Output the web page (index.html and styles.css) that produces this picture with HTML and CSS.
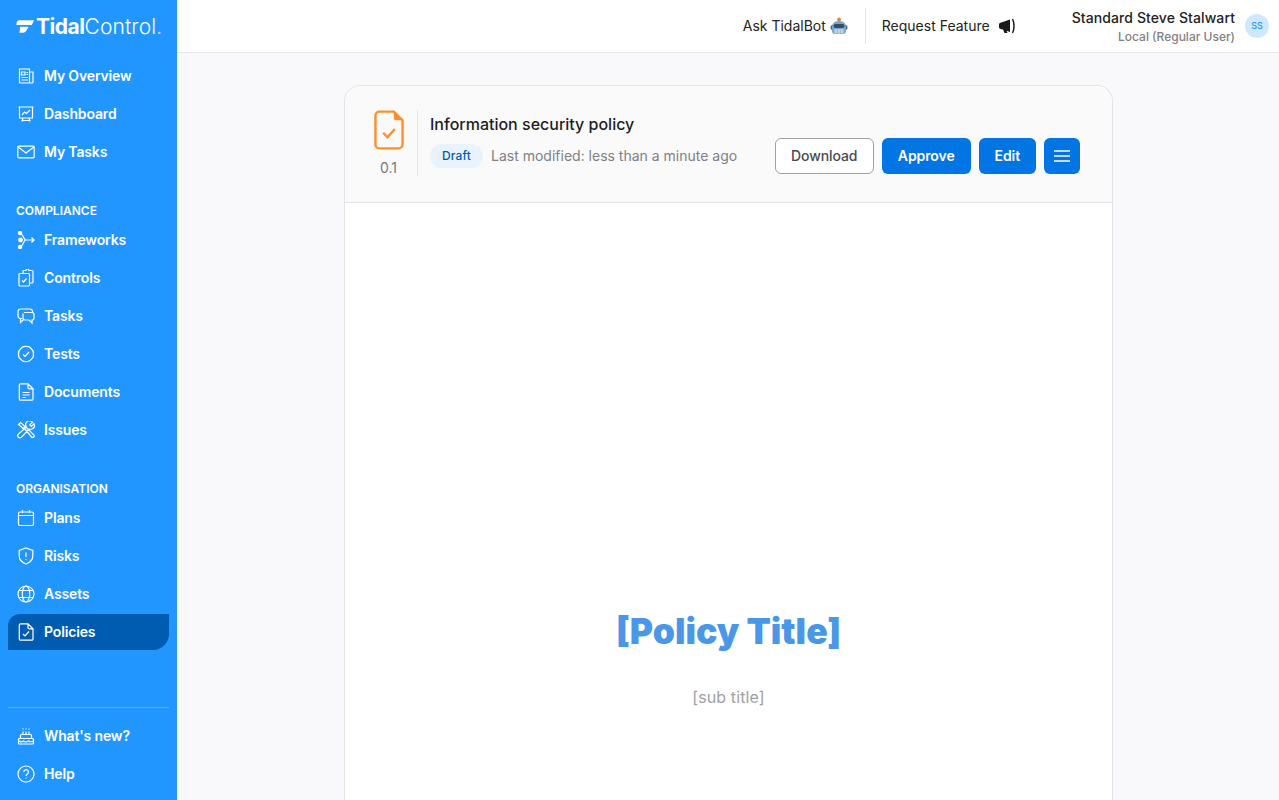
FILE: index.html
```html
<!DOCTYPE html>
<html lang="en">
<head>
    <meta charset="UTF-8">
    <meta name="viewport" content="width=device-width, initial-scale=1.0">
    <title>Information security policy</title>
    <link rel="stylesheet" href="styles.css">
</head>
<body>
<div class="app">
    <aside class="sidebar">
        <div class="logo">
            <svg class="logo-mark" viewBox="0 0 18 13"><path d="M3.2 0.3H18L15.8 4.900H0.500C0.300 2.300 1.300 0.300 3.200 0.300z" fill="#fff"/><path d="M4 6.800H12.500L10.800 10C9.800 12 8 12.800 5.800 12.800H3.300C4 10.800 3.900 8.800 4 6.800z" fill="#fff"/></svg>
            <span class="logo-text"><b>Tidal</b>Control<i>.</i></span>
        </div>
        <ul class="nav">
            <li><svg viewBox="0 0 18 18"><path d="M2.500 2h10v14h-9a1 1 0 0 1-1-1zM12.500 5h3.500v10a1 1 0 0 1-1 1h-2.500M4.500 5h3.500v3h-3.500zM9.500 5.500h1.500M9.500 7.500h1.500M4.500 10.500h6.500M4.500 13h6.500"/></svg>My Overview</li>
            <li><svg viewBox="0 0 18 18"><path d="M2.500 2h13v11h-13zM1.500 2h15M5 16.500l1-3.500M13 16.500l-1-3.500M4.500 15.500h9M5 10l2.500-3 2 1.500 3.500-3.500"/></svg>Dashboard</li>
            <li><svg viewBox="0 0 18 18"><path d="M.8 4.200a1 1 0 0 1 1-1h14.400a1 1 0 0 1 1 1v9.600a1 1 0 0 1-1 1H1.800a1 1 0 0 1-1-1zM1.200 4l7.800 6 7.800-6"/></svg>My Tasks</li>
        </ul>
        <h4 class="nav-title">COMPLIANCE</h4>
        <ul class="nav">
            <li><svg viewBox="0 0 18 18"><path d="M3 2c3 .5 3 5.500 5.500 7H17M3 16c3-.5 3-5.500 5.500-7M14.500 6.500 17 9l-2.500 2.500"/><circle class="dot" cx="3" cy="2" r="2.200"/><circle class="dot" cx="3.500" cy="9" r="2.400"/><circle class="dot" cx="3" cy="16" r="2.200"/></svg>Frameworks</li>
            <li><svg viewBox="0 0 18 18"><path d="M6 4.500V2.500a1 1 0 0 1 1-1h2a1.500 1.500 0 0 1 3 0h3a1 1 0 0 1 1 1V13a1 1 0 0 1-1 1h-2.500M3 4.500h8.500a1 1 0 0 1 1 1V16a1 1 0 0 1-1 1H3a1 1 0 0 1-1-1V5.500a1 1 0 0 1 1-1zM5 11.500l1.500 1.500 3-3.500"/></svg>Controls</li>
            <li><svg viewBox="0 0 18 18"><path d="M5 11.500H3.500a2.500 2.500 0 0 1-2.500-2.500V4.500A2.500 2.500 0 0 1 3.500 2h9.500a2.500 2.500 0 0 1 2.500 2.500v1M7 5.500h8a2 2 0 0 1 2 2V11a2 2 0 0 1-2 2v3l-3-3H8a2 2 0 0 1-2-2V6.500M3.500 11.500v4l3-3"/></svg>Tasks</li>
            <li><svg viewBox="0 0 18 18"><path d="M9 1.500A6 6 0 0 1 14.300 3.700A6 6 0 0 1 16.500 9A6 6 0 0 1 14.300 14.300A6 6 0 0 1 9 16.500A6 6 0 0 1 3.700 14.300A6 6 0 0 1 1.500 9A6 6 0 0 1 3.700 3.700A6 6 0 0 1 9 1.500zM6 9.500l2 2 4-4.500"/></svg>Tests</li>
            <li><svg viewBox="0 0 18 18"><path d="M3.500 .8h7.500l5 5V16a1.200 1.200 0 0 1-1.200 1.200H3.500A1.200 1.200 0 0 1 2.300 16V2A1.200 1.200 0 0 1 3.500 .8zM11 .8v3.700a1.300 1.300 0 0 0 1.300 1.300H16M5.500 9.500h7M5.500 12h7M5.500 14.500h3.500"/></svg>Documents</li>
            <li><svg viewBox="0 0 18 18"><path d="M1.500 3.500l2-2 4.500 4-2 2zM7.500 7.500l7 8.500a1.500 1.500 0 0 0 2.200-2.200L9.500 6.500M15.500 1.200l-2.800 2.500 1.700 1.700 2.600-2.600A3.800 3.800 0 0 1 12 8L4.800 15.800A2.200 2.200 0 1 1 1.800 12.800L9.500 6A3.800 3.800 0 0 1 15.500 1.200z"/></svg>Issues</li>
        </ul>
        <h4 class="nav-title">ORGANISATION</h4>
        <ul class="nav">
            <li><svg viewBox="0 0 18 18"><path d="M3 3h12a1.500 1.500 0 0 1 1.500 1.500V15a1.500 1.500 0 0 1-1.500 1.500H3A1.500 1.500 0 0 1 1.500 15V4.500A1.500 1.500 0 0 1 3 3zM1.500 6.500h15M5.500 1v3M12.500 1v3"/></svg>Plans</li>
            <li><svg viewBox="0 0 18 18"><path d="M9 1l6.800 2.500V9c0 4-3 6.500-6.800 8-3.800-1.500-6.800-4-6.800-8V3.500zM9 5.500V10M9 12v.8"/></svg>Risks</li>
            <li><svg viewBox="0 0 18 18"><circle cx="9" cy="9" r="8"/><ellipse cx="9" cy="9" rx="3.700" ry="8"/><path d="M2 5.500h14M2 12.500h14"/></svg>Assets</li>
            <li class="active"><svg viewBox="0 0 18 18"><path d="M3.500 .8h7.500l5 5V16a1.200 1.200 0 0 1-1.200 1.200H3.500A1.200 1.200 0 0 1 2.300 16V2A1.200 1.200 0 0 1 3.500 .8zM11 .8v3.700a1.300 1.300 0 0 0 1.300 1.300H16M6 11l2 2 4-4.500"/></svg>Policies</li>
        </ul>
        <div class="nav-bottom">
            <ul class="nav">
                <li><svg viewBox="0 0 18 18"><path d="M3.500 8.500a1 1 0 0 1 1-1h9a1 1 0 0 1 1 1v3h-11zM1.500 12.500a1 1 0 0 1 1-1h13a1 1 0 0 1 1 1V16a1 1 0 0 1-1 1h-13a1 1 0 0 1-1-1zM2 14c1.500 1 3 1 4.300 0 1.500 1 3.700 1 5.300 0 1.500 1 3 1 4.400 0M6 4.500v3M9 4.500v3M12 4.500v3M6 1.500v1M9 1.500v1M12 1.500v1"/></svg>What's new?</li>
                <li><svg viewBox="0 0 18 18"><circle cx="9" cy="9" r="8"/><path d="M6.800 7a2.300 2.300 0 1 1 3.500 2c-.9.600-1.300 1-1.300 2M9 12.800v.7"/></svg>Help</li>
            </ul>
        </div>
    </aside>
    <div class="main">
        <header class="topbar">
            <div class="top-link">Ask TidalBot
                <svg width="18" height="18" viewBox="0 0 18 18"><circle cx="9" cy="2.400" r="1.900" fill="#e8833a"/><path d="M9 3v2" stroke="#8a9aa8"/><rect x="0.500" y="8" width="17" height="5" rx="2" fill="#4a6a85"/><path d="M2 9a7 5 0 0 1 14 0v5a3 3 0 0 1-3 3H5a3 3 0 0 1-3-3z" fill="#7fa6c6"/><rect x="3.500" y="7" width="11" height="4" rx="2" fill="#2f4f6b"/><path d="M4 13h10M4 15h10M6 12v5M9 12v5M12 12v5" stroke="#dfe9f1" fill="none" stroke-width=".8"/></svg>
            </div>
            <span class="top-sep"></span>
            <div class="top-link feature">Request Feature
                <svg width="18" height="16" viewBox="0 0 18 16"><path d="M1 6.500C1 5.500 1.800 5 2.500 4.800L12 1.500V14L8.500 12.800 9.500 15H6.500L5 11.500 2.500 11C1.500 10.800 1 10 1 9z" fill="#1a1a1a"/><path d="M14.500 1c2 3.500 2 10.500 0 14" fill="none" stroke="#1a1a1a" stroke-width="1.500"/></svg>
            </div>
            <div class="user">
                <div class="user-name">Standard Steve Stalwart</div>
                <div class="user-role">Local (Regular User)</div>
            </div>
            <span class="avatar">SS</span>
        </header>
        <div class="content">
            <div class="card">
                <div class="card-head">
                    <div class="doc-version">
                        <svg viewBox="0.5 0.5 31 41"><path d="M6 2h15l9 9v25a4 4 0 0 1-4 4H6a4 4 0 0 1-4-4V6a4 4 0 0 1 4-4z" fill="none" stroke="#ff8f2b" stroke-width="2.500"/><path d="M21 1.500 30.500 11H24a3 3 0 0 1-3-3z" fill="#ff8f2b"/><path d="M10 24l4.500 4.500L22 20" fill="none" stroke="#ff8f2b" stroke-width="2.500"/></svg>
                        <span class="version">0.1</span>
                    </div>
                    <div class="doc-info">
                        <div class="doc-title">Information security policy</div>
                        <div class="doc-meta">
                            <span class="badge">Draft</span>
                            <span class="modified">Last modified: less than a minute ago</span>
                        </div>
                    </div>
                    <div class="actions">
                        <button class="btn btn-outline">Download</button>
                        <button class="btn">Approve</button>
                        <button class="btn">Edit</button>
                        <button class="btn btn-menu"><svg width="16" height="12" viewBox="0 0 16 12"><path d="M0 1h16M0 6h16M0 11h16" stroke="#fff" stroke-width="1.400"/></svg></button>
                    </div>
                </div>
                <div class="page">
                    <h1 class="policy-title">[Policy Title]</h1>
                    <p class="policy-sub">[sub title]</p>
                </div>
            </div>
        </div>
    </div>
</div>
</body>
</html>
```

FILE: styles.css
```css
*{
    margin: 0;
    padding: 0;
    box-sizing: border-box;
}
html, body{
    height: 100%;
    overflow: hidden;
}
body{
    font-family: Inter, "Liberation Sans", sans-serif;
    font-size: 14px;
    color: #1d1d1f;
}
.app{
    display: flex;
    height: 100%;
}
.sidebar{
    width: 177px;
    flex-shrink: 0;
    background: #2196ff;
    color: #fff;
    display: flex;
    flex-direction: column;
    padding: 0 8px;
}
.logo{
    height: 38px;
    margin-top: 7px;
    display: flex;
    align-items: center;
    gap: 2px;
    padding-left: 8px;
}
.logo-mark{
    flex-shrink: 0;
    width: 18px;
    height: 13px;
}
.logo-text{
    font-size: 21px;
    font-weight: 300;
    letter-spacing: 0.1px;
}
.logo-text b{
    font-weight: 700;
    letter-spacing: -0.45px;
}
.logo-text i{
    font-style: normal;
    opacity: 0.7;
}
.nav{
    list-style: none;
    display: flex;
    flex-direction: column;
    gap: 2px;
}
.logo + .nav{
    margin-top: 13px;
}
.nav>li{
    height: 36px;
    display: flex;
    align-items: center;
    gap: 9px;
    padding: 0 0 1px 9px;
    font-weight: 600;
    font-size: 14px;
    letter-spacing: -0.15px;
}
.nav svg{
    width: 18px;
    height: 18px;
    fill: none;
    stroke: #fff;
    stroke-width: 1.2;
    flex-shrink: 0;
}
.nav svg .dot{
    fill: #fff;
    stroke: none;
}
.nav>.active{
    background: #005cb0;
    border-radius: 12px 0 16px 0;
}
.nav-title{
    font-size: 12px;
    font-weight: 600;
    line-height: 14px;
    padding-left: 8px;
    margin-top: 34px;
    margin-bottom: 4px;
}
.nav-bottom{
    margin-top: auto;
    border-top: 1px solid rgba(255, 255, 255, 0.25);
    padding-top: 10px;
    padding-bottom: 8px;
}
.main{
    flex-grow: 1;
    background: #f9f9fc;
    display: flex;
    flex-direction: column;
    min-width: 0;
}
.topbar{
    height: 53px;
    flex-shrink: 0;
    background: #fff;
    border-bottom: 1px solid #e5e5e8;
    display: flex;
    align-items: center;
    justify-content: flex-end;
    padding: 0 10px 1px 0;
}
.top-link{
    display: flex;
    align-items: center;
    gap: 4px;
    font-size: 14px;
    color: #222;
}
.feature{
    gap: 8px;
    margin-right: 56px;
}
.top-sep{
    width: 1px;
    height: 36px;
    background: #e5e5e8;
    margin: 0 16px 0 17px;
}
.user{
    text-align: right;
    margin-right: 10px;
    padding-top: 5px;
}
.user-name{
    font-size: 14px;
    font-weight: 500;
    line-height: 18px;
    letter-spacing: 0.1px;
    color: #222;
}
.user-role{
    font-size: 12px;
    font-weight: 500;
    line-height: 20px;
    color: #808085;
}
.avatar{
    width: 24px;
    height: 24px;
    border-radius: 50%;
    background: #cfe8ff;
    color: #2196ff;
    font-size: 9px;
    font-weight: 500;
    display: flex;
    align-items: center;
    justify-content: center;
}
.content{
    flex-grow: 1;
    display: flex;
    min-height: 0;
    padding: 32px 166px 0 167px;
}
.card{
    flex-grow: 1;
    background: #fff;
    border: 1px solid #e3e4e8;
    border-bottom: 0;
    border-radius: 16px 16px 0 0;
}
.card-head{
    height: 117px;
    background: #fafafb;
    border-bottom: 1px solid #e3e4e8;
    border-radius: 16px 16px 0 0;
    display: flex;
    padding: 24px 32px 0 28px;
}
.doc-version{
    width: 45px;
    height: 66px;
    border-right: 1px solid #e3e4e8;
    padding-right: 13px;
    display: flex;
    flex-direction: column;
    align-items: center;
}
.doc-version svg{
    width: 30px;
    height: 40px;
}
.version{
    font-size: 14px;
    color: #76767b;
    margin-top: 9px;
}
.doc-info{
    padding-left: 12px;
    flex-grow: 1;
}
.doc-title{
    font-size: 16px;
    font-weight: 500;
    line-height: 20px;
    margin-top: 4px;
}
.doc-meta{
    display: flex;
    align-items: center;
    gap: 8px;
    margin-top: 10px;
}
.badge{
    height: 24px;
    line-height: 24px;
    padding: 0 12px;
    border-radius: 12px;
    background: #e8f3fe;
    color: #005cb0;
    font-size: 12px;
    font-weight: 500;
    letter-spacing: 0.15px;
}
.modified{
    color: #808085;
    font-size: 14px;
    line-height: 22px;
    padding-bottom: 1px;
}
.actions{
    display: flex;
    gap: 8px;
    margin-top: 28px;
    height: 36px;
}
.btn{
    height: 36px;
    padding: 0 16px 2px;
    border: 0;
    border-radius: 6px;
    background: #0075e3;
    color: #fff;
    font-family: inherit;
    font-size: 14px;
    font-weight: 600;
    letter-spacing: -0.1px;
}
.btn-outline{
    padding: 0 15.5px 2px;
    background: #fff;
    border: 1px solid #a0a0a5;
    color: #4a4a4f;
    font-weight: 500;
}
.btn-menu{
    width: 36px;
    padding: 0;
    display: flex;
    align-items: center;
    justify-content: center;
}
.page{
    text-align: center;
    padding-top: 404px;
}
.policy-title{
    font-size: 35.5px;
    font-weight: 900;
    line-height: 50px;
    color: #4a97e8;
}
.policy-sub{
    font-size: 16px;
    line-height: 20px;
    letter-spacing: 0.1px;
    color: #a0a0a3;
    margin-top: 30px;
}
```
